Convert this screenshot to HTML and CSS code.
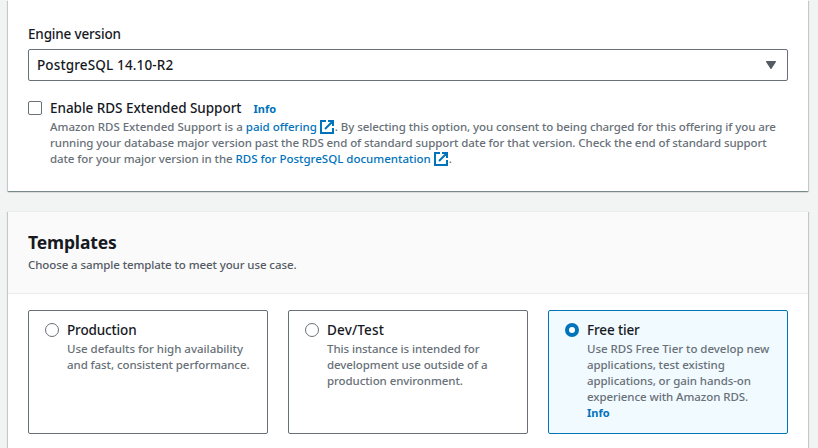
FILE: index.html
```
<!DOCTYPE html>
<html lang="en">
<head>
<meta charset="utf-8">
<title>Create database</title>
<link rel="stylesheet" href="styles.css">
</head>
<body>
<main class="page">
  <section class="panel engine">
    <div class="field-label"><span class="t-engine">Engine version</span></div>
    <div class="select">
      <span class="t-version">PostgreSQL 14.10-R2</span>
      <svg class="caret" width="10" height="8" viewBox="0 0 10 8"><path d="M.6.6h8.8L5 7.4z" fill="#545b64" stroke="#545b64" stroke-width="1.2" stroke-linejoin="round"/></svg>
    </div>
    <div class="option">
      <span class="checkbox"></span>
      <div class="option-body">
        <div class="option-title"><span class="t-enable">Enable RDS Extended Support</span><a class="info">Info</a></div>
        <div class="desc">
          <div class="line">Amazon RDS Extended Support is a <a>paid offering <svg class="ext" width="14" height="14" viewBox="0 0 14 14"><path d="M6 1H1v12h12V8M8 1h5v5M13 1 5 9" fill="none" stroke="#0073bb" stroke-width="2"/></svg></a><span class="snug">. By selecting this option, you consent to being charged for this offering if you are</span></div>
          <div class="line snug">running your database major version past the RDS end of standard support date for that version. Check the end of standard support</div>
          <div class="line"><span class="snug">date for your major version in the </span><a>RDS for PostgreSQL documentation <svg class="ext" width="14" height="14" viewBox="0 0 14 14"><path d="M6 1H1v12h12V8M8 1h5v5M13 1 5 9" fill="none" stroke="#0073bb" stroke-width="2"/></svg></a>.</div>
        </div>
      </div>
    </div>
  </section>

  <section class="panel templates">
    <header class="panel-header">
      <h2>Templates</h2>
      <p>Choose a sample template to meet your use case.</p>
    </header>
    <div class="cards">
      <div class="card">
        <span class="radio"></span>
        <div>
          <div class="card-title">Production</div>
          <div class="desc">
            <div class="line t-p1">Use defaults for high availability</div>
            <div class="line snug">and fast, consistent performance.</div>
          </div>
        </div>
      </div>
      <div class="card">
        <span class="radio"></span>
        <div>
          <div class="card-title t-dev">Dev/Test</div>
          <div class="desc">
            <div class="line snug">This instance is intended for</div>
            <div class="line snug">development use outside of a</div>
            <div class="line snug">production environment.</div>
          </div>
        </div>
      </div>
      <div class="card selected">
        <span class="radio"></span>
        <div>
          <div class="card-title">Free tier</div>
          <div class="desc">
            <div class="line t-p1">Use RDS Free Tier to develop new</div>
            <div class="line snug">applications, test existing</div>
            <div class="line snug">applications, or gain hands-on</div>
            <div class="line snug">experience with Amazon RDS.</div>
            <div class="line"><a class="info">Info</a></div>
          </div>
        </div>
      </div>
    </div>
  </section>
</main>
</body>
</html>
```
FILE: styles.css
```
* { box-sizing: border-box; }
body {
  margin: 0;
  height: 448px;
  overflow: hidden;
  background: #f2f3f3;
  color: #16191f;
  font: 500 13.5px/22px "Noto Sans", sans-serif;
}
.page { padding: 0 10px 0 8px; display: flex; flex-direction: column; gap: 20px; }
.panel {
  background: #fff;
  box-shadow: 0 1px 1px 0 rgba(0,28,36,.3), 1px 1px 1px 0 rgba(0,28,36,.15), -1px 1px 1px 0 rgba(0,28,36,.15);
}
.engine { height: 191px; padding: 23px 20px 0; }
.t-engine { letter-spacing: -.17px; }
.t-version { letter-spacing: .14px; }
.t-enable { letter-spacing: -.03px; }
.select {
  display: flex;
  align-items: center;
  justify-content: space-between;
  height: 32px;
  margin-top: 4px;
  padding: 0 11px 0 8px;
  border: 1px solid #687078;
  border-radius: 2px;
}
.caret { display: block; }
.option { display: flex; gap: 8px; margin-top: 16px; }
.checkbox { width: 14px; height: 14px; margin-top: 4px; border: 1px solid #687078; border-radius: 2px; flex: none; }
.option-title { display: flex; gap: 12px; }
.option-title .info { padding-top: 1px; line-height: 21px; }
.info { color: #0073bb; font-weight: 700; font-size: 11px; }
.desc { color: #687078; font-size: 11.5px; font-weight: 550; line-height: 16px; }
.line { height: 16px; white-space: nowrap; }
.snug { letter-spacing: -.08px; }
.t-p1 { letter-spacing: -.03px; }
a { color: #0073bb; }
.ext { vertical-align: -3px; margin-right: 1px; }
.templates { height: 237px; border-top: 1px solid #eaeded; }
.panel-header { height: 82px; padding: 19px 20px 0; background: #fafafa; border-bottom: 1px solid #eaeded; }
h2 { margin: 0; font-size: 17.5px; line-height: 22px; font-weight: 700; letter-spacing: -.15px; }
p { margin: 3px 0 0; color: #545b64; font-size: 11.5px; font-weight: 550; line-height: 18px; letter-spacing: -.095px; }
.cards { display: grid; grid-template-columns: repeat(3, 1fr); gap: 20px; padding: 16px 20px 0; }
.card { display: flex; gap: 8px; height: 124px; padding: 8px 0 0 16px; border: 1px solid #687078; border-radius: 2px; white-space: nowrap; }
.card-title { letter-spacing: -.14px; }
.t-dev { letter-spacing: .15px; }
.radio { width: 14px; height: 14px; margin-top: 4px; border: 1px solid #687078; border-radius: 50%; flex: none; background: #fff; }
.selected { background: #f1faff; border-color: #0073bb; }
.selected .radio { border: 4px solid #0073bb; }
```
